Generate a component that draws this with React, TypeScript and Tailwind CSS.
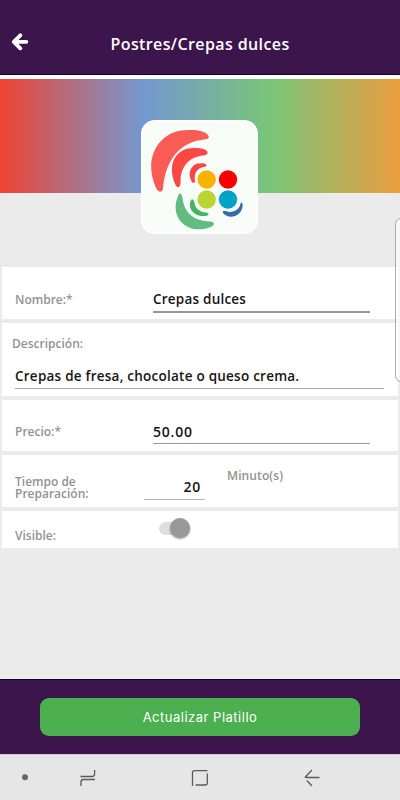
import type { ReactNode } from "react";

const Row = ({ className, children }: { className: string; children: ReactNode }) => (
  <div className={`mx-[2px] bg-white flex items-start ${className}`}>{children}</div>
);

const Logo = () => (
  <svg viewBox="0 0 130 125" className="w-[130px] h-[125px] shrink-0" aria-label="Logo">
    <path d="M73 20C75 23 73 24.500 69 24.500C46 27 31 43 28 73C27.500 78 23.500 78 21 73C7 42 25 13 56 15C64 15 70 16.500 73 20Z" fill="#f95c54" />
    <path d="M72 36C74 39 71 40.500 67 40.500C53 43 45 52 45.500 68C45 73.500 42 73 40.500 70C31 48 42 33 58 33C64 32.500 70 33.500 72 36Z" fill="#fb4845" />
    <path d="M71 49.500C72.500 51 71 52 68 52C61 54 59 59 60 66C60 69 57 68.500 56 65C52 56 58 48 65 48.500C68 48 70 48.500 71 49.500Z" fill="#f94743" />
    <path d="M43.500 80C45 77 47 79 47.500 83C49 97 58 106 75 106.500C80 106.500 80 110 76 112C53 121 33 103 43.500 80Z" fill="#62bb80" />
    <path d="M56 85C57 83 59 85 59.500 88C60.500 94 65 97 71 97.500C75 98 74 101 70 101C59 102 52 93 56 85Z" fill="#43b563" />
    <path d="M88 98C87 96 89 95.500 92 96.500C98 98 104 95 105.500 89C106 86 108 88 107.700 91C106 102 94 105 88 98Z" fill="#376ba7" />
    <circle cx="71.700" cy="64.500" r="9.200" fill="#f9b200" />
    <circle cx="93" cy="64.500" r="9.200" fill="#f80000" />
    <circle cx="71.700" cy="84.500" r="9.200" fill="#bad531" />
    <circle cx="93" cy="84.500" r="9.200" fill="#00a3c3" />
  </svg>
);

export default function App() {
  return (
    <div className="relative w-[400px] h-[800px] overflow-hidden bg-[#ebebeb] flex flex-col font-['Open_Sans',sans-serif] text-[12px] leading-[18px] text-[#929292]">
      <header className="h-[75px] shrink-0 bg-[#3d154d] border-b border-[#14002f] flex items-start">
        <button className="mt-[33px] ml-[11px] w-[18px] h-[18px]" aria-label="Regresar">
          <svg viewBox="0 0 18 18" className="block w-[18px] h-[18px]" fill="none" stroke="white" strokeWidth="3.800" strokeLinecap="round" strokeLinejoin="round">
            <path d="M9.300 2.300L2.800 8.800L9.300 15.300M3.500 8.800H15.400" />
          </svg>
        </button>
        <h1 className="mt-[32px] ml-[81.500px] text-[16px] leading-[24px] font-semibold tracking-[0.390px] text-white whitespace-nowrap">
          Postres/Crepas dulces
        </h1>
      </header>
      <div className="h-[4px] shrink-0 bg-white" />
      <div className="h-[114px] shrink-0 bg-linear-[90deg,#f04433_0%,#7398d0_36%,#7ac578_68%,#ed9d40_100%]" />

      <div className="-mt-[73px] ml-[141px] w-[117px] h-[114px] shrink-0 rounded-[14px] border-2 border-white bg-[#f7fcf9] flex items-center justify-center overflow-hidden">
        <Logo />
      </div>

      <main className="mt-[33px] flex-1 flex flex-col gap-[4px]">
        <Row className="h-[52px]">
          <label className="ml-[13px] mt-[24px] w-[138px] font-semibold">Nombre:*</label>
          <div className="mt-[22px] w-[217px] h-[23.500px] border-b-2 border-[#979797] text-[13.500px] leading-[21px] font-semibold tracking-[0.220px] text-[#151515]">
            Crepas dulces
          </div>
        </Row>
        <Row className="h-[73px] flex-col">
          <label className="ml-[10px] mt-[12px] font-semibold">Descripción:</label>
          <div className="ml-[13px] mt-[14px] w-[369px] h-[22px] border-b border-[#aaa] text-[13.500px] leading-[18px] font-semibold tracking-[0.240px] text-[#151515]">
            Crepas de fresa, chocolate o queso crema.
          </div>
        </Row>
        <Row className="h-[51px]">
          <label className="ml-[13px] mt-[23px] w-[138px] font-semibold">Precio:*</label>
          <div className="mt-[22px] w-[217px] h-[22px] border-b border-[#999] text-[14px] leading-[19px] font-semibold tracking-[0.800px] text-[#151515]">
            50.00
          </div>
        </Row>
        <Row className="h-[52px]">
          <label className="ml-[13px] mt-[21px] w-[129px] leading-[12px] font-semibold">
            Tiempo de
            <br />
            Preparación:
          </label>
          <div className="mt-[22px] w-[61px] h-[23px] pr-[4px] text-right border-b border-[#b5b5b5] text-[14px] leading-[20px] font-semibold tracking-[0.800px] text-[#151515]">
            20
          </div>
          <span className="ml-[22px] mt-[12px] tracking-[0.100px] font-semibold">Minuto(s)</span>
        </Row>
        <Row className="h-[37px]">
          <label className="ml-[13px] mt-[16px] w-[144px] font-semibold">Visible:</label>
          <div role="switch" aria-checked="true" className="mt-[11px] w-[31px] h-[13px] rounded-full bg-[#dedede] flex items-center justify-end">
            <div className="w-[20px] h-[20px] shrink-0 -mt-[1px] rounded-full bg-[#999] shadow-[0_1px_2px_rgba(0,0,0,0.4)]" />
          </div>
        </Row>
      </main>

      <footer className="h-[75px] shrink-0 bg-[#3d154d] border-t border-[#14002f] px-[40px] pt-[18px]">
        <button className="block w-full h-[38px] rounded-[9px] bg-[#4caf50] font-['Inter',sans-serif] text-[13px] tracking-[0.500px] text-white">
          Actualizar Platillo
        </button>
      </footer>
      <nav className="h-[46px] shrink-0 bg-[#e6e6e6] border-t border-[#d2cbd5]">
        <svg viewBox="0 0 400 45" className="block w-[400px] h-[45px]" fill="none" stroke="#5b5b5b" strokeWidth="1.300">
          <circle cx="25" cy="22.300" r="3" fill="#666" stroke="none" />
          <path d="M80.500 21.500H92Q94.600 21.500 94.600 19V15M95 24.500H83.500Q81 24.500 81 27V31" />
          <path d="M207.500 15.600H194.500Q192.500 15.600 192.500 17.600V31M195.500 30H205Q207.300 30 207.300 28V18.500" />
          <path d="M319.500 22.500H305.500M312 15L304.800 22.500M306.800 25.500L312 31" />
        </svg>
      </nav>

      {/* edge panel handle */}
      <div className="absolute left-[395px] top-[218px] w-[12px] h-[164px] rounded-l-[6px] border border-[#aaa] bg-white/60" />
    </div>
  );
}
